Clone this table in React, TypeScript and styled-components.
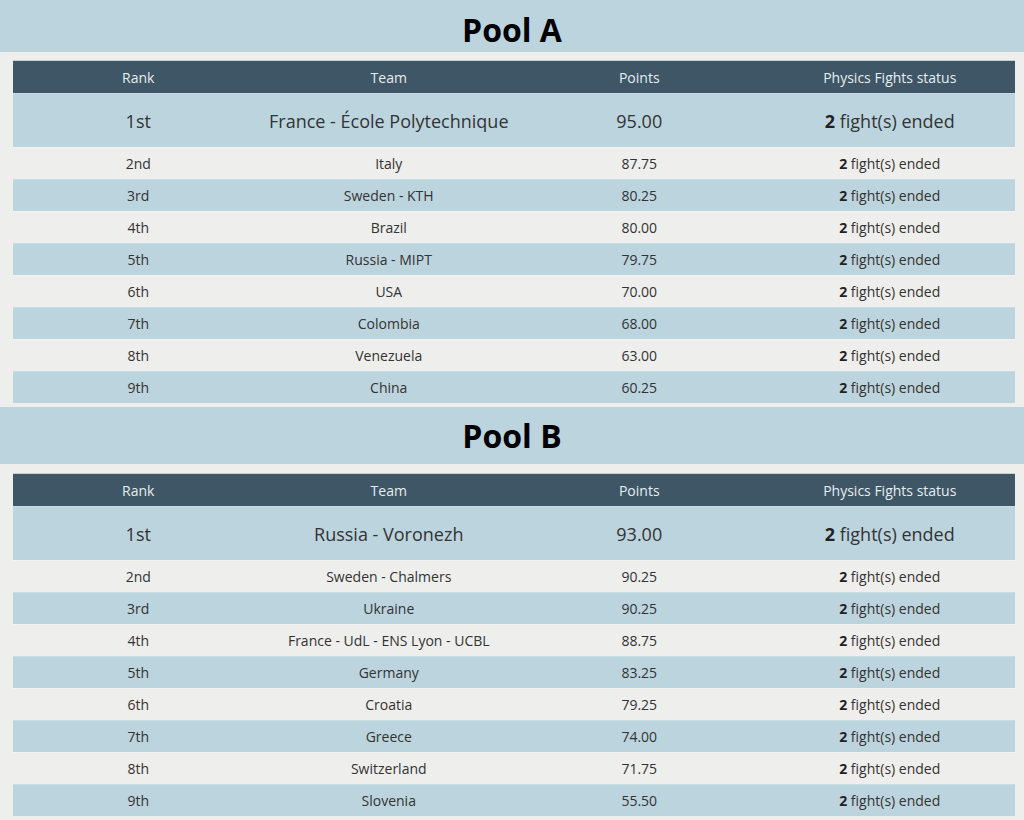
import styled, { createGlobalStyle } from 'styled-components'

type Entry = { team: string; points: string; fights: number }

const poolA: Entry[] = [
  { team: 'France - École Polytechnique', points: '95.00', fights: 2 },
  { team: 'Italy', points: '87.75', fights: 2 },
  { team: 'Sweden - KTH', points: '80.25', fights: 2 },
  { team: 'Brazil', points: '80.00', fights: 2 },
  { team: 'Russia - MIPT', points: '79.75', fights: 2 },
  { team: 'USA', points: '70.00', fights: 2 },
  { team: 'Colombia', points: '68.00', fights: 2 },
  { team: 'Venezuela', points: '63.00', fights: 2 },
  { team: 'China', points: '60.25', fights: 2 },
]

const poolB: Entry[] = [
  { team: 'Russia - Voronezh', points: '93.00', fights: 2 },
  { team: 'Sweden - Chalmers', points: '90.25', fights: 2 },
  { team: 'Ukraine', points: '90.25', fights: 2 },
  { team: 'France - UdL - ENS Lyon - UCBL', points: '88.75', fights: 2 },
  { team: 'Germany', points: '83.25', fights: 2 },
  { team: 'Croatia', points: '79.25', fights: 2 },
  { team: 'Greece', points: '74.00', fights: 2 },
  { team: 'Switzerland', points: '71.75', fights: 2 },
  { team: 'Slovenia', points: '55.50', fights: 2 },
]

const ordinal = (n: number) => {
  if (n === 1) return '1st'
  if (n === 2) return '2nd'
  if (n === 3) return '3rd'
  return `${n}th`
}

const Pool = ({ title, entries, first }: { title: string; entries: Entry[]; first?: boolean }) => (
  <Section $first={!!first}>
    <Banner $first={!!first}>
      <Title>{title}</Title>
    </Banner>
    <Table>
      <HeaderRow>
        <Cell>Rank</Cell>
        <Cell>Team</Cell>
        <Cell>Points</Cell>
        <Cell>Physics Fights status</Cell>
      </HeaderRow>
      {entries.map((entry, i) => (
        <Row key={entry.team} $leader={i === 0} $striped={i % 2 === 0}>
          <Cell>{ordinal(i + 1)}</Cell>
          <Cell>{entry.team}</Cell>
          <Cell>{entry.points}</Cell>
          <Cell>
            <Count>{entry.fights}</Count> fight(s) ended
          </Cell>
        </Row>
      ))}
    </Table>
  </Section>
)

const App = () => (
  <>
    <GlobalStyle />
    <Page>
      <Pool title="Pool A" entries={poolA} first />
      <Pool title="Pool B" entries={poolB} />
    </Page>
  </>
)

const GlobalStyle = createGlobalStyle`
  html, body {
    margin: 0;
    padding: 0;
    background: #eeeeec;
    overflow: hidden;
  }
  body {
    font-family: "Open Sans", "Noto Sans", sans-serif;
    color: #333;
  }
`

const Page = styled.div`
  display: flex;
  flex-direction: column;
  gap: 4px;
`

const Section = styled.section<{ $first: boolean }>`
  display: flex;
  flex-direction: column;
  gap: ${(p) => (p.$first ? '8px' : '9px')};
`

const Banner = styled.div<{ $first: boolean }>`
  box-sizing: border-box;
  height: ${(p) => (p.$first ? '52px' : '57px')};
  padding-top: ${(p) => (p.$first ? '8px' : '0')};
  background: #bcd4de;
  display: flex;
  align-items: center;
  justify-content: center;
`

const Title = styled.h1`
  margin: 0;
  font-size: 32px;
  font-weight: 700;
  line-height: 44px;
  color: #000;
`

const Table = styled.div`
  margin: 0 9px 0 13px;
  border-top: 1px solid #c9cfd2;
  display: flex;
  flex-direction: column;
`

const Cell = styled.div`
  text-align: center;
  white-space: nowrap;
`

const HeaderRow = styled.div`
  display: grid;
  grid-template-columns: repeat(4, 1fr);
  align-items: center;
  height: 32px;
  background: #3e5665;
  color: #e6edf0;
  font-size: 14px;
`

const Row = styled.div<{ $leader: boolean; $striped: boolean }>`
  display: grid;
  grid-template-columns: repeat(4, 1fr);
  align-items: center;
  box-sizing: border-box;
  height: ${(p) => (p.$leader ? '54px' : '32px')};
  font-size: ${(p) => (p.$leader ? '18px' : '14px')};
  background: ${(p) => (p.$striped ? '#bcd4de' : '#eeeeec')};
  border-top: 1px solid ${(p) => (p.$striped ? '#c8dce4' : '#f3f3f1')};
`

const Count = styled.b`
  font-weight: 700;
  color: #222;
`

export default App
